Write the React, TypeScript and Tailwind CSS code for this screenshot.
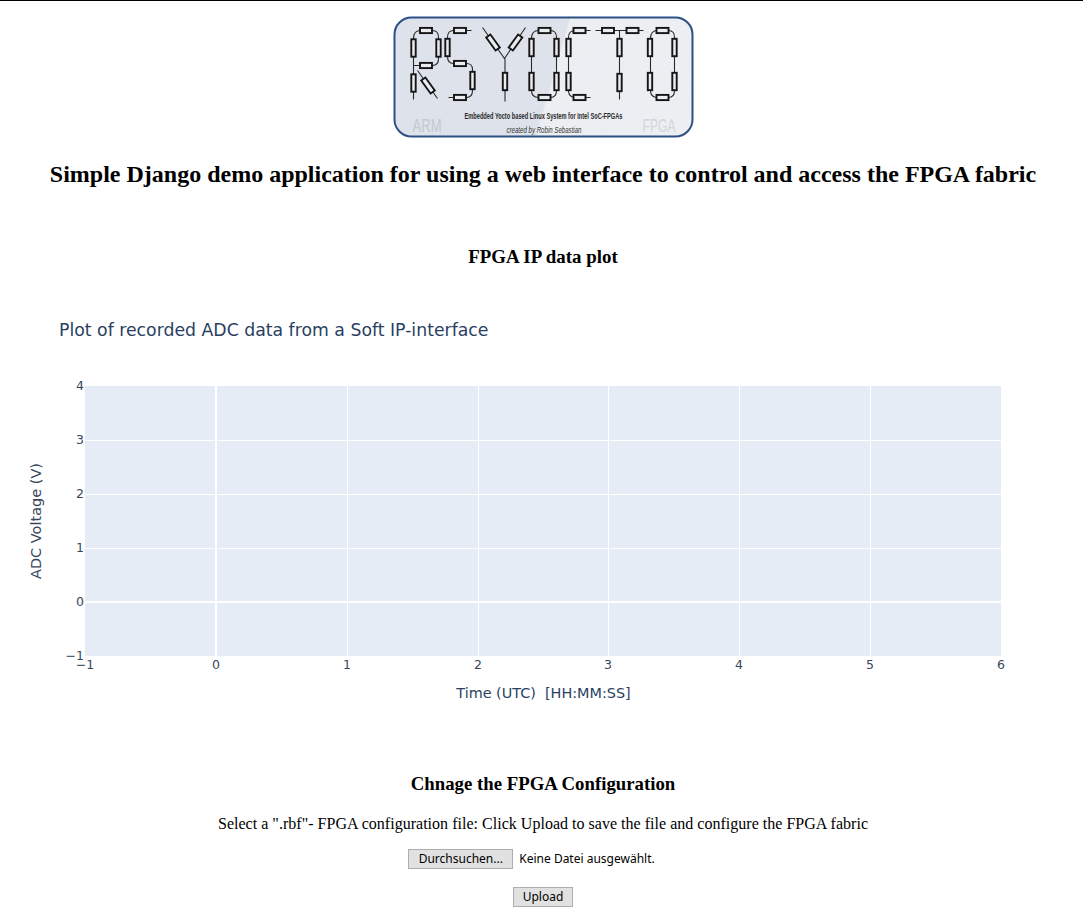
const SERIF = "font-['Liberation_Serif',serif]";

// horizontal / vertical resistor symbols for the logo
function H({ x, y }: { x: number; y: number }) {
  return <rect x={x - 6} y={y - 2.6} width={12} height={5.2} fill="#e9ecf1" stroke="#151515" strokeWidth={1.9} />;
}

function V({ x, y }: { x: number; y: number }) {
  return <rect x={x - 2.2} y={y - 8.7} width={4.4} height={17.4} fill="#e9ecf1" stroke="#151515" strokeWidth={1.9} />;
}

function D({ x, y, angle }: { x: number; y: number; angle: number }) {
  return (
    <rect
      x={x - 2.6}
      y={y - 8}
      width={5.2}
      height={16}
      fill="#e9ecf1"
      stroke="#151515"
      strokeWidth={1.9}
      transform={`rotate(${angle} ${x} ${y})`}
    />
  );
}

function Logo() {
  return (
    <svg width="301" height="122" viewBox="392.5 15.5 301 122" className="block">
      <defs>
        <pattern id="hatch" width="2" height="2" patternUnits="userSpaceOnUse" patternTransform="rotate(45)">
          <rect width="2" height="2" fill="#f0f2f5" />
          <rect width="1" height="2" fill="#e8ebef" />
        </pattern>
        <clipPath id="card">
          <rect x="394" y="17" width="298" height="119" rx="17" />
        </clipPath>
      </defs>
      <g clipPath="url(#card)">
        <rect x="393" y="16" width="300" height="121" fill="#dee2ea" />
        <path d="M570 16 L693 16 L693 137 L535 137 Z" fill="url(#hatch)" />
      </g>
      <rect x="394" y="17" width="298" height="119" rx="17" fill="none" stroke="#2c4f85" strokeWidth="2" />
      <g fill="none" stroke="#2a2a2a" strokeWidth="1.1">
        {/* R */}
        <path d="M413 99V38Q413 30 420 30H432Q438 30 438 37V58Q438 65 432 65H413" />
        <path d="M417 70L437 98" />
        {/* S */}
        <path d="M471 30H453Q447 30 447 37V56Q447 63 453 63H466Q472 63 472 69V90Q472 97 466 97H448" />
        {/* Y */}
        <path d="M482 27L504 58L525 27M504.5 58V101" />
        {/* first O */}
        <path d="M531 38Q531 30 538 30H550Q556 30 556 37V90Q556 97 550 97H538Q531 97 531 90Z" />
        {/* C */}
        <path d="M590 30H575Q568 30 568 37V90Q568 97 575 97H590" />
        {/* T */}
        <path d="M595 30H643M619 30V99" />
        {/* second O */}
        <path d="M650 38Q650 30 657 30H668Q674 30 674 37V90Q674 97 668 97H657Q650 97 650 90Z" />
      </g>
      <H x={425.5} y={30} />
      <V x={413} y={47.5} />
      <V x={438} y={47.5} />
      <H x={425.5} y={65} />
      <V x={413} y={82.5} />
      <D x={427.5} y={85} angle={-36} />
      <H x={459.5} y={30} />
      <V x={447} y={47} />
      <H x={459.5} y={63} />
      <V x={472} y={80} />
      <H x={459.5} y={97} />
      <D x={492.5} y={42} angle={-36} />
      <D x={515} y={42} angle={36} />
      <V x={504.5} y={81} />
      <H x={544} y={30} />
      <V x={531} y={47} />
      <V x={531} y={81} />
      <V x={556} y={47} />
      <V x={556} y={81} />
      <H x={544} y={97} />
      <V x={568} y={47} />
      <V x={568} y={81} />
      <H x={579} y={30} />
      <H x={579} y={97} />
      <H x={607.5} y={30} />
      <H x={632} y={30} />
      <V x={619} y={47} />
      <V x={619} y={82} />
      <V x={649.5} y={47} />
      <V x={649.5} y={81} />
      <V x={674} y={47} />
      <V x={674} y={81} />
      <H x={662} y={30} />
      <H x={662} y={97} />
      <text x="464" y="118.5" textLength="158" lengthAdjust="spacingAndGlyphs" fontFamily="Liberation Sans" fontSize="9.5" fontWeight="700" fill="#2a2a2a">
        Embedded Yocto based Linux System for Intel SoC-FPGAs
      </text>
      <text x="506" y="132" textLength="75" lengthAdjust="spacingAndGlyphs" fontFamily="Liberation Sans" fontSize="8.5" fontStyle="italic" fill="#333">
        created by Robin Sebastian
      </text>
      <text x="412" y="131" textLength="29" lengthAdjust="spacingAndGlyphs" fontFamily="Liberation Sans" fontSize="18" fill="#c3c8d1">
        ARM
      </text>
      <text x="642" y="131" textLength="33" lengthAdjust="spacingAndGlyphs" fontFamily="Liberation Sans" fontSize="18" fill="#d3d6dc">
        FPGA
      </text>
    </svg>
  );
}

const xTicks = [
  { label: "−1", x: 85 },
  { label: "0", x: 216 },
  { label: "1", x: 347 },
  { label: "2", x: 478 },
  { label: "3", x: 608 },
  { label: "4", x: 739 },
  { label: "5", x: 870 },
  { label: "6", x: 1001 },
];

const yTicks = [
  { label: "4", y: 386 },
  { label: "3", y: 440 },
  { label: "2", y: 494 },
  { label: "1", y: 548 },
  { label: "0", y: 602 },
  { label: "−1", y: 656 },
];

function Plot() {
  return (
    <svg width="1083" height="450" viewBox="0 300 1083 450" className="block" fontFamily="DejaVu Sans" fill="#2a3f5f">
      <text x="59" y="336" fontSize="17.3">Plot of recorded ADC data from a Soft IP-interface</text>
      <rect x="85" y="386" width="916" height="270" fill="#e5ecf6" />
      {xTicks.slice(1, -1).map((t) =>
        t.label === "0" ? (
          <line key={t.x} x1={t.x} x2={t.x} y1="386" y2="656" stroke="#fff" strokeWidth={2} />
        ) : (
          <line key={t.x} x1={t.x + 0.5} x2={t.x + 0.5} y1="386" y2="656" stroke="#fff" strokeWidth={1} />
        ),
      )}
      {yTicks.slice(1, -1).map((t) =>
        t.label === "0" ? (
          <line key={t.y} x1="85" x2="1001" y1={t.y} y2={t.y} stroke="#fff" strokeWidth={2} />
        ) : (
          <line key={t.y} x1="85" x2="1001" y1={t.y + 0.5} y2={t.y + 0.5} stroke="#fff" strokeWidth={1} />
        ),
      )}
      {xTicks.map((t) => (
        <text key={t.x} x={t.x} y="669" fontSize="12.5" fill="#38465a" textAnchor="middle">{t.label}</text>
      ))}
      {yTicks.map((t) => (
        <text key={t.y} x="84" y={t.y + 4} fontSize="12.5" fill="#38465a" textAnchor="end">{t.label}</text>
      ))}
      <text x="543.5" y="698" fontSize="14.4" textAnchor="middle" xmlSpace="preserve">Time (UTC)  [HH:MM:SS]</text>
      <text x="41" y="521" fontSize="14.5" fill="#38465a" textAnchor="middle" transform="rotate(-90 41 521)">ADC Voltage (V)</text>
    </svg>
  );
}

export default function App() {
  return (
    <div className={`${SERIF} h-[918px] overflow-hidden bg-white text-black`}>
      <div className="h-px bg-black" />
      <div className="pl-[3px]">
        <div className="mt-[15px] flex justify-center">
          <Logo />
        </div>
        <h1 className="mt-[22px] text-center text-[24px] font-bold leading-[28px]">
          Simple Django demo application for using a web interface to control and access the FPGA fabric
        </h1>
        <h3 className="mt-[58px] text-center text-[18.9px] font-bold leading-[22px]">FPGA IP data plot</h3>
      </div>
      <div className="mt-[32px]">
        <Plot />
      </div>
      <div className="pl-[3px]">
        <h3 className="mt-[23px] text-center text-[18.8px] font-bold leading-[22px]">Chnage the FPGA Configuration</h3>
        <p className="mt-[20px] text-center text-[16px] leading-[18px] tracking-[0.02px]">
          Select a ".rbf"- FPGA configuration file: Click Upload to save the file and configure the FPGA fabric
        </p>
        <div className="mt-[16px] flex items-center justify-center gap-[6px] pr-[23px] font-['Noto_Sans',sans-serif] text-[12px]">
          <button className="h-5 w-[105px] border border-[#adadad] bg-[#e1e1e1] leading-none">Durchsuchen...</button>
          <span>Keine Datei ausgewählt.</span>
        </div>
        <div className="mt-[18px] flex justify-center font-['Noto_Sans',sans-serif] text-[12px]">
          <button className="h-5 w-[60px] border border-[#adadad] bg-[#e1e1e1] leading-none">Upload</button>
        </div>
      </div>
    </div>
  );
}
